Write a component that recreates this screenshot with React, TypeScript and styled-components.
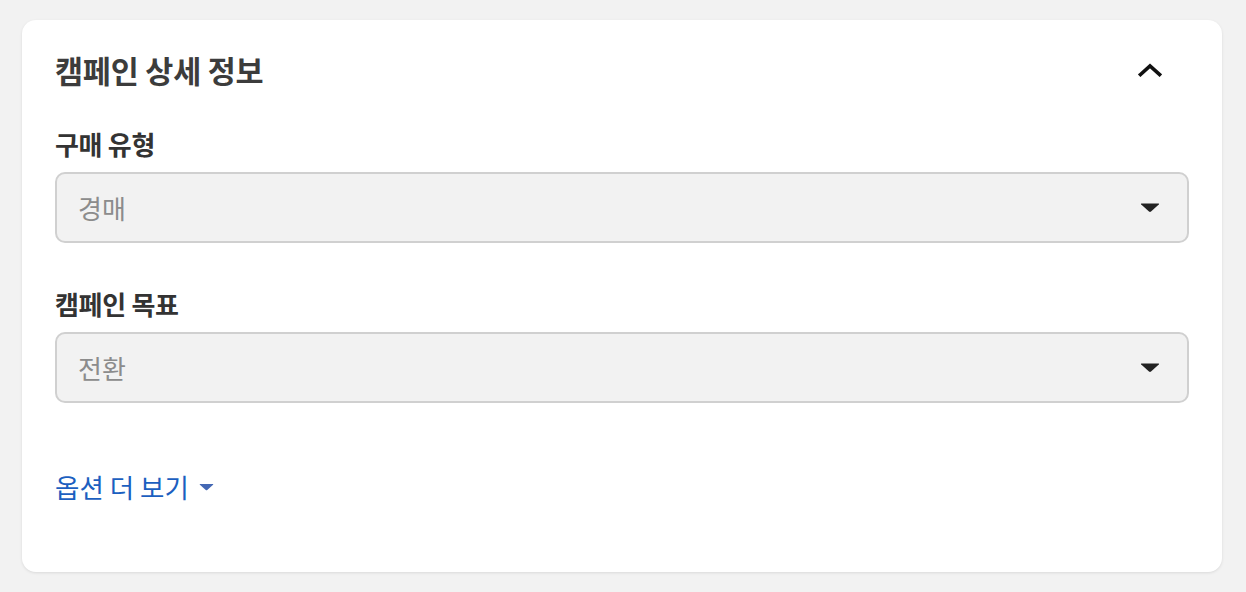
import React from "react";
import styled, { createGlobalStyle } from "styled-components";

const GlobalStyle = createGlobalStyle`
  html, body {
    margin: 0;
    padding: 0;
    background: #f2f2f2;
  }
  body {
    font-family: "Noto Sans CJK KR", "Noto Sans", sans-serif;
  }
`;

const Page = styled.div`
  padding: 20px 24px 20px 22px;
`;

const Card = styled.section`
  background: #ffffff;
  border-radius: 14px;
  box-shadow: 0 1px 3px rgba(0, 0, 0, 0.1);
  height: 552px;
  box-sizing: border-box;
  padding: 32px 33px 0 33px;
  display: flex;
  flex-direction: column;
`;

const Header = styled.div`
  display: flex;
  align-items: center;
  justify-content: space-between;
  height: 36px;
  margin-bottom: 40px;
`;

const Title = styled.h2`
  margin: 0;
  font-size: 30.5px;
  line-height: 36px;
  font-weight: 700;
  color: #3c3c3c;
  letter-spacing: -0.2px;
`;

const ToggleButton = styled.button`
  width: 40px;
  height: 40px;
  margin-right: 19px;
  border: none;
  background: transparent;
  padding: 0;
  display: flex;
  align-items: center;
  justify-content: center;
  cursor: pointer;
`;

const Field = styled.div<{ $gapAfter: number }>`
  display: flex;
  flex-direction: column;
  margin-bottom: ${(p) => p.$gapAfter}px;
`;

const Label = styled.label`
  font-size: 26px;
  line-height: 32px;
  font-weight: 700;
  color: #333333;
  margin-bottom: 12px;
  letter-spacing: -0.3px;
`;

const SelectBox = styled.div`
  height: 71px;
  box-sizing: border-box;
  border: 2px solid #d0d0d0;
  border-radius: 10px;
  background: #f2f2f2;
  display: flex;
  align-items: center;
  justify-content: space-between;
  padding: 0 27px 0 21px;
`;

const SelectValue = styled.span`
  font-size: 26px;
  line-height: 32px;
  color: #8c8c8c;
`;

const MoreLink = styled.a`
  display: inline-flex;
  align-items: center;
  gap: 10px;
  font-size: 26.5px;
  line-height: 32px;
  color: #1c5fc0;
  text-decoration: none;
  cursor: pointer;
  align-self: flex-start;
`;

const ChevronUp = () => (
  <svg width="24" height="14" viewBox="0 0 24 14" fill="none">
    <path
      d="M2.5 11.5 L12 3 L21.5 11.5"
      stroke="#111"
      strokeWidth="3.6"
      strokeLinecap="square"
      strokeLinejoin="miter"
    />
  </svg>
);

const CaretDown = ({ color, w, h }: { color: string; w: number; h: number }) => (
  <svg width={w} height={h} viewBox="0 0 20 10">
    <path
      d="M1.5 1 H18.5 Q19.6 1 18.8 1.9 L11 9 Q10 9.8 9 9 L1.2 1.9 Q0.4 1 1.5 1 Z"
      fill={color}
    />
  </svg>
);

const fields = [
  { label: "구매 유형", value: "경매", gap: 45 },
  { label: "캠페인 목표", value: "전환", gap: 68 },
];

export default function App() {
  return (
    <>
      <GlobalStyle />
      <Page>
        <Card>
          <Header>
            <Title>캠페인 상세 정보</Title>
            <ToggleButton aria-label="접기">
              <ChevronUp />
            </ToggleButton>
          </Header>
          {fields.map((f) => (
            <Field key={f.label} $gapAfter={f.gap}>
              <Label>{f.label}</Label>
              <SelectBox>
                <SelectValue>{f.value}</SelectValue>
                <CaretDown color="#222" w={20} h={11} />
              </SelectBox>
            </Field>
          ))}
          <MoreLink>
            옵션 더 보기
            <CaretDown color="#4468b4" w={15} h={8} />
          </MoreLink>
        </Card>
      </Page>
    </>
  );
}
